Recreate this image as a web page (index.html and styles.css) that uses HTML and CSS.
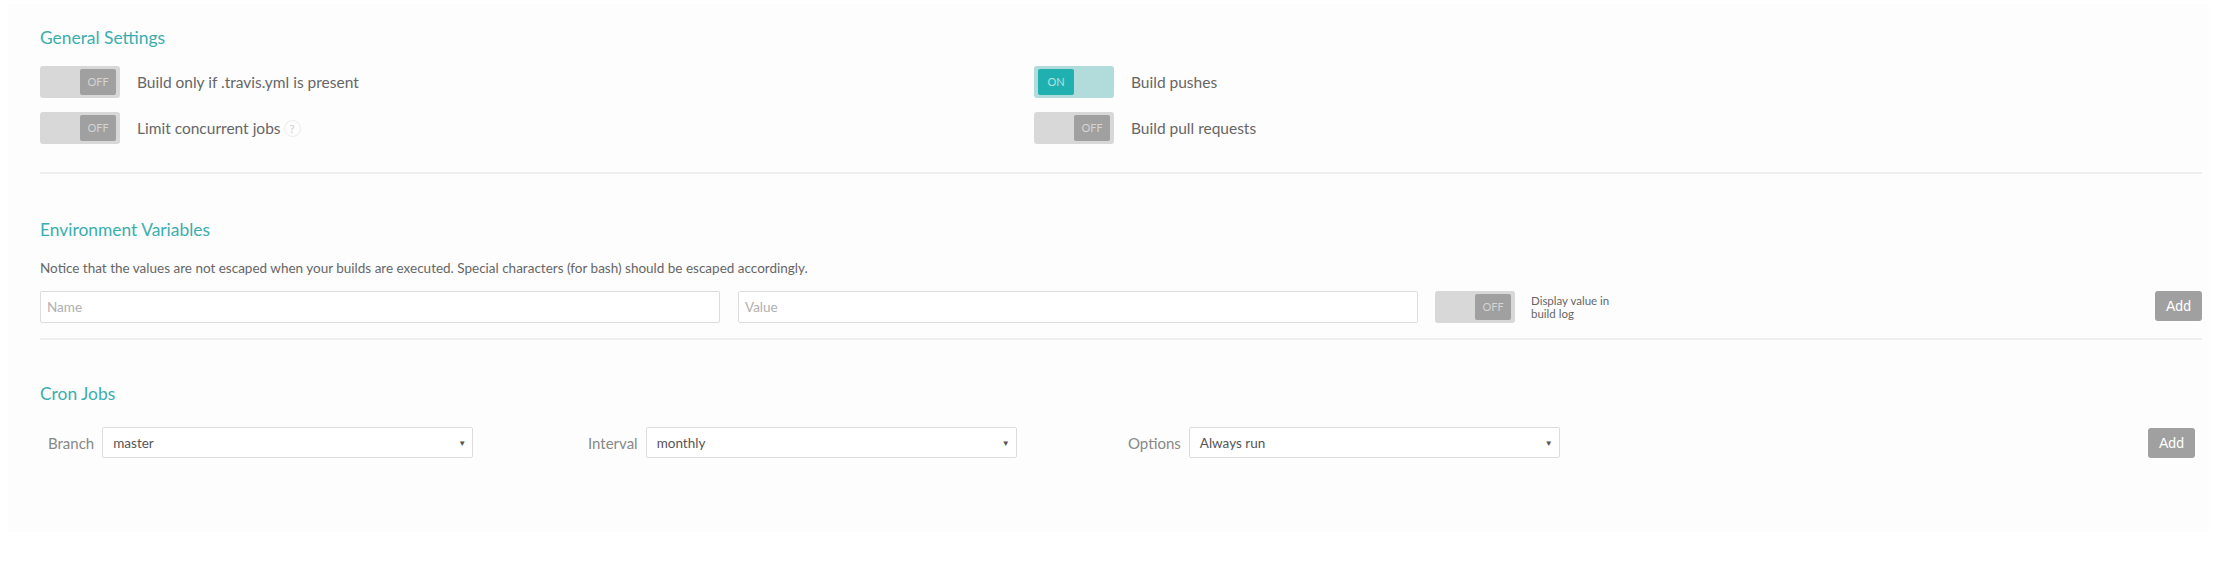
FILE: index.html
```html
<!DOCTYPE html>
<html lang="en">
<head>
<meta charset="utf-8">
<title>Settings</title>
<link rel="stylesheet" href="styles.css">
</head>
<body>
<div class="panel">
  <section class="section">
    <h2 class="title title-general">General Settings</h2>
    <div class="settings">
      <div class="setting">
        <div class="toggle"><span class="knob">OFF</span></div>
        <span class="setting-label">Build only if .travis.yml is present</span>
      </div>
      <div class="setting">
        <div class="toggle toggle-on"><span class="knob">ON</span></div>
        <span class="setting-label">Build pushes</span>
      </div>
      <div class="setting">
        <div class="toggle"><span class="knob">OFF</span></div>
        <span class="setting-label">Limit concurrent jobs</span>
        <span class="help">?</span>
      </div>
      <div class="setting">
        <div class="toggle"><span class="knob">OFF</span></div>
        <span class="setting-label">Build pull requests</span>
      </div>
    </div>
  </section>

  <hr class="divider divider-first">

  <section class="section">
    <h2 class="title title-env">Environment Variables</h2>
    <p class="notice">Notice that the values are not escaped when your builds are executed. Special characters (for bash) should be escaped accordingly.</p>
    <div class="env-row">
      <input class="field field-name" type="text" placeholder="Name">
      <input class="field field-value" type="text" placeholder="Value">
      <div class="toggle toggle-env"><span class="knob">OFF</span></div>
      <span class="env-note">Display value in build log</span>
      <button class="add-btn add-env" type="button">Add</button>
    </div>
  </section>

  <hr class="divider divider-second">

  <section class="section">
    <h2 class="title title-cron">Cron Jobs</h2>
    <div class="cron-row">
      <div class="cron-group">
        <span class="cron-label">Branch</span>
        <div class="select"><span>master</span><span class="arrow">▼</span></div>
      </div>
      <div class="cron-group">
        <span class="cron-label">Interval</span>
        <div class="select"><span>monthly</span><span class="arrow">▼</span></div>
      </div>
      <div class="cron-group">
        <span class="cron-label">Options</span>
        <div class="select"><span>Always run</span><span class="arrow">▼</span></div>
      </div>
      <button class="add-btn add-cron" type="button">Add</button>
    </div>
  </section>
</div>
</body>
</html>
```

FILE: styles.css
```css
html, body {
  margin: 0;
  padding: 0;
  background: #ffffff;
}

body {
  font-family: Lato, "Noto Sans", sans-serif;
  color: #666666;
}

.panel {
  margin: 4px 8px 0 8px;
  background: #fdfdfd;
  padding: 22px 7px 74px 32px;
}

.title {
  margin: 0;
  font-size: 17.4px;
  line-height: 24px;
  font-weight: 400;
  color: #3aaeae;
}

.title-env {
  margin-top: 44px;
}

.title-cron {
  margin-top: 42px;
}

.settings {
  display: grid;
  grid-template-columns: 994px 1fr;
  row-gap: 14px;
  margin-top: 16px;
}

.setting {
  display: flex;
  align-items: center;
  gap: 17px;
}

.setting-label {
  font-size: 15.5px;
  color: #666666;
}

.help {
  margin-left: -14px;
  width: 15px;
  height: 15px;
  border: 1px solid #ececec;
  border-radius: 50%;
  font-size: 11px;
  line-height: 15px;
  text-align: center;
  color: #cccccc;
}

.toggle {
  width: 80px;
  height: 32px;
  box-sizing: border-box;
  padding: 3px 4px;
  background: #d8d8d8;
  border-radius: 3px;
  display: flex;
  justify-content: flex-end;
  flex-shrink: 0;
}

.toggle-on {
  justify-content: flex-start;
  background: #b2dbdb;
}

.knob {
  width: 36px;
  height: 26px;
  border-radius: 2px;
  background: #a0a0a0;
  color: #d4d4d4;
  font-size: 11px;
  line-height: 26px;
  text-align: center;
}

.toggle-on .knob {
  background: #21b0b0;
  color: #b4e2e2;
}

.divider {
  border: 0;
  border-top: 2px solid #efefef;
  margin: 0;
}

.divider-first {
  margin-top: 28px;
}

.divider-second {
  margin-top: 15px;
}

.notice {
  margin: 16px 0 0;
  font-size: 13.5px;
  line-height: 20px;
  color: #666666;
}

.env-row {
  display: flex;
  align-items: center;
  margin-top: 13px;
}

.field {
  width: 680px;
  height: 32px;
  box-sizing: border-box;
  border: 1px solid #dddddd;
  border-radius: 2px;
  background: #ffffff;
  padding: 0 6px;
  font-family: Lato, "Noto Sans", sans-serif;
  font-size: 13.5px;
  color: #555555;
  outline: none;
}

.field::placeholder {
  color: #b0b0b0;
}

.field-name {
  margin-right: 18px;
}

.field-value {
  margin-right: 17px;
}

.env-note {
  margin-left: 16px;
  width: 86px;
  font-size: 11.5px;
  line-height: 13.5px;
  color: #666666;
}

.add-btn {
  width: 47px;
  height: 30px;
  border: 0;
  border-radius: 3px;
  background: #a0a0a0;
  color: #ffffff;
  font-family: "Liberation Sans", Arial, sans-serif;
  font-size: 14px;
  padding: 0;
  margin-left: auto;
}

.add-env {
  align-self: flex-start;
}

.add-cron {
  margin-right: 7px;
}

.cron-row {
  display: flex;
  align-items: center;
  margin-top: 21px;
}

.cron-group {
  width: 540px;
  box-sizing: border-box;
  padding-left: 8px;
  display: flex;
  align-items: center;
  gap: 8px;
}

.cron-label {
  font-size: 15px;
  color: #888888;
}

.select {
  width: 371px;
  height: 31px;
  box-sizing: border-box;
  border: 1px solid #dddddd;
  border-radius: 2px;
  background: #ffffff;
  padding: 0 6px 0 10px;
  display: flex;
  align-items: center;
  justify-content: space-between;
  font-size: 13.5px;
  color: #555555;
}

.arrow {
  font-size: 8px;
  color: #555555;
}
```
